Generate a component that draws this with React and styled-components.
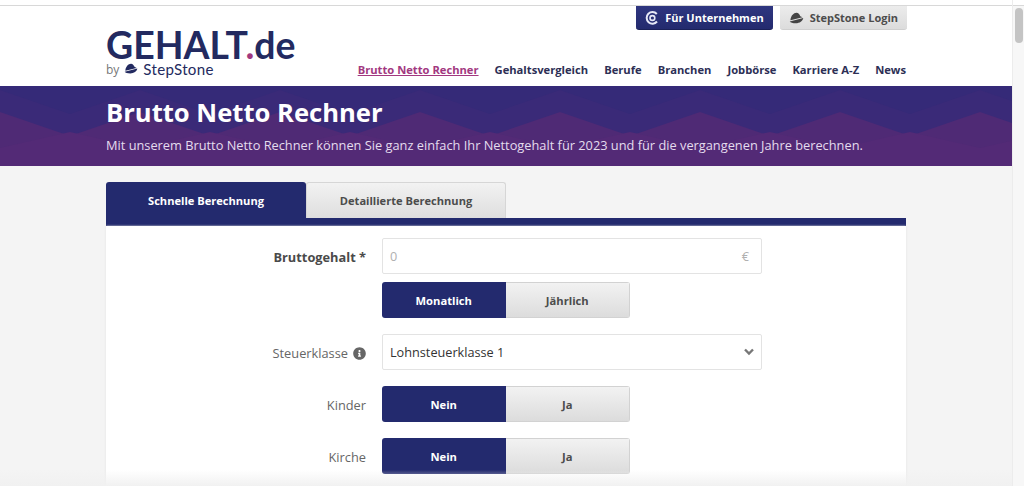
import styled, { createGlobalStyle } from 'styled-components';
import { FaInfoCircle } from 'react-icons/fa';

const GlobalStyle = createGlobalStyle`
  html, body {
    margin: 0;
    height: 486px;
    overflow: hidden;
    background: #f4f4f4;
    font-family: "Open Sans", "Liberation Sans", sans-serif;
  }
  * { box-sizing: border-box; }
`;

const Page = styled.div`
  display: flex;
  height: 486px;
  overflow: hidden;
  position: relative;
`;

const Main = styled.div`
  flex: 1;
  min-width: 0;
`;

const Scrollbar = styled.div`
  width: 12px;
  background: linear-gradient(#fff 5px, #d8d8d8 5px, #d8d8d8 6px, #f7f7f7 6px);
  border-left: 1px solid #ececec;
  padding: 8px 1px 0 2px;
`;

const ScrollThumb = styled.div`
  height: 35px;
  border-radius: 4px;
  background: #c4c4c4;
`;

const TopStrip = styled.div`
  height: 6px;
  background: #fff;
  border-bottom: 1px solid #d8d8d8;
`;

const Header = styled.header`
  height: 80px;
  background: #fff;
  padding: 0 106px;
  display: flex;
  justify-content: space-between;
`;

const Logo = styled.div`
  padding-top: 22px;
  color: #232a60;
`;

const LogoWord = styled.div`
  font-family: "Lato", "Open Sans", sans-serif;
  font-weight: 700;
  font-size: 37.400px;
  line-height: 34px;
  span { color: #a2387f; }
`;

const LogoBy = styled.div`
  display: flex;
  align-items: center;
  height: 14px;
  color: #232a60;
  small {
    font-size: 12px;
    color: #777;
    margin-right: 5px;
  }
  b {
    font-family: "Lato", sans-serif;
    font-weight: 400;
    font-size: 15.100px;
    letter-spacing: 0.3px;
    margin-left: 5px;
  }
`;

const HeaderRight = styled.div`
  display: flex;
  flex-direction: column;
  align-items: flex-end;
  justify-content: space-between;
  padding-bottom: 8px;
`;

const TopButtons = styled.div`
  display: flex;
  gap: 7px;
  margin-right: -1px;
`;

const TopButton = styled.a`
  height: 24px;
  display: flex;
  align-items: center;
  gap: 6px;
  padding: 0 9px;
  border-radius: 0 0 3px 3px;
  font-size: 11px;
  font-weight: 700;
  color: ${(p) => (p.$dark ? '#fff' : '#4c4c4c')};
  background: ${(p) =>
    p.$dark ? 'linear-gradient(#2f3680, #232a6e)' : 'linear-gradient(#ececec, #dcdcdc)'};
  border-bottom: 1px solid ${(p) => (p.$dark ? '#1b2158' : '#cfcfcf')};
`;

const Nav = styled.nav`
  display: flex;
  gap: 16px;
  font-size: 11.200px;
  font-weight: 700;
  line-height: 16px;
`;

const NavLink = styled.a`
  color: ${(p) => (p.$active ? '#a2387f' : '#2d2f55')};
  text-decoration: ${(p) => (p.$active ? 'underline' : 'none')};
`;

const Banner = styled.section`
  position: relative;
  height: 80px;
  overflow: hidden;
  padding: 10px 106px 0;
  background: #352a78;
  color: #fff;
`;

const BannerArt = styled.svg`
  position: absolute;
  inset: 0;
  width: 100%;
  height: 100%;
`;

const BannerTitle = styled.h1`
  position: relative;
  margin: 0;
  font-size: 25.600px;
  line-height: 34px;
  font-weight: 700;
`;

const BannerText = styled.p`
  position: relative;
  margin: 5px 0 0;
  font-size: 12.800px;
  line-height: 20px;
  color: #e4dcee;
`;

const Content = styled.div`
  padding: 16px 106px 0;
`;

const Tabs = styled.div`
  display: flex;
  height: 36px;
`;

const Tab = styled.div`
  width: 200px;
  display: flex;
  align-items: center;
  justify-content: center;
  font-size: 11.100px;
  font-weight: 700;
  border-radius: 3px 3px 0 0;
  color: ${(p) => (p.$active ? '#fff' : '#4c4c4c')};
  background: ${(p) => (p.$active ? '#232a6e' : 'linear-gradient(#f2f2f2, #dedede)')};
  border: ${(p) => (p.$active ? 'none' : '1px solid #d6d6d6')};
  border-bottom: none;
`;

const TabBar = styled.div`
  height: 8px;
  background: #232a6e;
`;

const Card = styled.div`
  background: #fff;
  height: 260px;
  padding-top: 12px;
  display: flex;
  flex-direction: column;
  box-shadow: 0 0 2px #e2e2e2;
`;

const Row = styled.div`
  display: flex;
  align-items: center;
  margin-bottom: ${(p) => p.$gap ?? 16}px;
`;

const Label = styled.label`
  width: 276px;
  padding: 2px 16px 0 0;
  display: flex;
  justify-content: flex-end;
  align-items: center;
  gap: 5px;
  font-size: 12.800px;
  font-weight: ${(p) => (p.$strong ? 700 : 400)};
  color: ${(p) => (p.$strong ? '#4a4a4a' : '#666')};
`;

const Field = styled.div`
  width: 380px;
  height: 36px;
  display: flex;
  align-items: center;
  justify-content: space-between;
  padding: 0 ${(p) => (p.$muted ? 12 : 7)}px 0 7px;
  background: #fff;
  border: 1px solid #e3e3e3;
  border-radius: 2px;
  font-size: 12.700px;
  color: ${(p) => (p.$muted ? '#b0b0b0' : '#333')};
`;

const Toggle = styled.div`
  display: flex;
  width: 248px;
  height: 36px;
  border-radius: 3px;
  overflow: hidden;
`;

const ToggleOption = styled.div`
  flex: 1;
  display: flex;
  align-items: center;
  justify-content: center;
  font-size: 11.200px;
  font-weight: 700;
  color: ${(p) => (p.$active ? '#fff' : '#4c4c4c')};
  background: ${(p) => (p.$active ? '#232a6e' : 'linear-gradient(#f2f2f2, #dcdcdc)')};
  border: ${(p) => (p.$active ? 'none' : '1px solid #d2d2d2')};
  border-left: none;
`;

const BottomFade = styled.div`
  position: absolute;
  left: 0;
  right: 12px;
  bottom: 0;
  height: 16px;
  background: linear-gradient(rgba(244, 244, 244, 0), #f1f1f1);
  pointer-events: none;
`;

const StoneIcon = ({ size = 14, color = '#232a60' }) => (
  <svg width={size} height={size * 0.8} viewBox="0 0 20 16" fill={color}>
    <path d="M2 9.500C3 5 6 1 10 1c2.500 0 4 2 5 4.500l3 1.500-16 4z" />
    <path d="M1 12.500l18-4.500c-.5 4-5 7-10 7-4 0-7-1-8-2.500z" />
  </svg>
);

const FirmIcon = () => (
  <svg width="14" height="14" viewBox="0 0 14 14" fill="none" stroke="#e6e8f6" strokeWidth="2">
    <path d="M11.800 3A5.800 5.800 0 1 0 12 10.500" />
    <circle cx="7.400" cy="7" r="2.400" strokeWidth="1.600" />
  </svg>
);

const Chevron = () => (
  <svg width="10" height="8" viewBox="0 0 10 8" fill="none" stroke="#777" strokeWidth="2.400">
    <path d="M1 1.500l4 4 4-4" />
  </svg>
);

const navItems = ['Gehaltsvergleich', 'Berufe', 'Branchen', 'Jobbörse', 'Karriere A-Z', 'News'];

// zigzag with a 140px period, peaks at x = 0, 140, 280...
const zigzag = (peak, valley) => {
  let d = `M0 ${peak}`;
  for (let x = 70; x <= 1050; x += 70) {
    d += `L${x} ${(x / 70) % 2 ? valley : peak}`;
  }
  return `${d}V80H0z`;
};

const YesNo = () => (
  <Toggle>
    <ToggleOption $active>Nein</ToggleOption>
    <ToggleOption>Ja</ToggleOption>
  </Toggle>
);

export default function App() {
  return (
    <Page>
      <GlobalStyle />
      <Main>
        <TopStrip />
        <Header>
          <Logo>
            <LogoWord>GEHALT<span>.</span>de</LogoWord>
            <LogoBy>
              <small>by</small>
              <StoneIcon />
              <b>StepStone</b>
            </LogoBy>
          </Logo>
          <HeaderRight>
            <TopButtons>
              <TopButton $dark><FirmIcon />Für Unternehmen</TopButton>
              <TopButton><StoneIcon size={15} color="#444" />StepStone Login</TopButton>
            </TopButtons>
            <Nav>
              <NavLink $active>Brutto Netto Rechner</NavLink>
              {navItems.map((item) => (
                <NavLink key={item}>{item}</NavLink>
              ))}
            </Nav>
          </HeaderRight>
        </Header>
        <Banner>
          <BannerArt viewBox="0 0 1012 80" preserveAspectRatio="none">
            <path fill="#3a2a78" d={zigzag(4, 28)} />
            <path fill="#4f2a75" d={zigzag(26, 50)} />
            <path fill="#532a76" d={zigzag(62, 46)} />
          </BannerArt>
          <BannerTitle>Brutto Netto Rechner</BannerTitle>
          <BannerText>
            Mit unserem Brutto Netto Rechner können Sie ganz einfach Ihr Nettogehalt für 2023 und für die vergangenen Jahre berechnen.
          </BannerText>
        </Banner>
        <Content>
          <Tabs>
            <Tab $active>Schnelle Berechnung</Tab>
            <Tab>Detaillierte Berechnung</Tab>
          </Tabs>
          <TabBar />
          <Card>
            <Row $gap={8}>
              <Label $strong>Bruttogehalt *</Label>
              <Field $muted>0<span>€</span></Field>
            </Row>
            <Row>
              <Label />
              <Toggle>
                <ToggleOption $active>Monatlich</ToggleOption>
                <ToggleOption>Jährlich</ToggleOption>
              </Toggle>
            </Row>
            <Row>
              <Label>Steuerklasse <FaInfoCircle size={13} color="#666" /></Label>
              <Field>Lohnsteuerklasse 1<Chevron /></Field>
            </Row>
            <Row>
              <Label>Kinder</Label>
              <YesNo />
            </Row>
            <Row>
              <Label>Kirche</Label>
              <YesNo />
            </Row>
          </Card>
        </Content>
      </Main>
      <Scrollbar><ScrollThumb /></Scrollbar>
      <BottomFade />
    </Page>
  );
}
